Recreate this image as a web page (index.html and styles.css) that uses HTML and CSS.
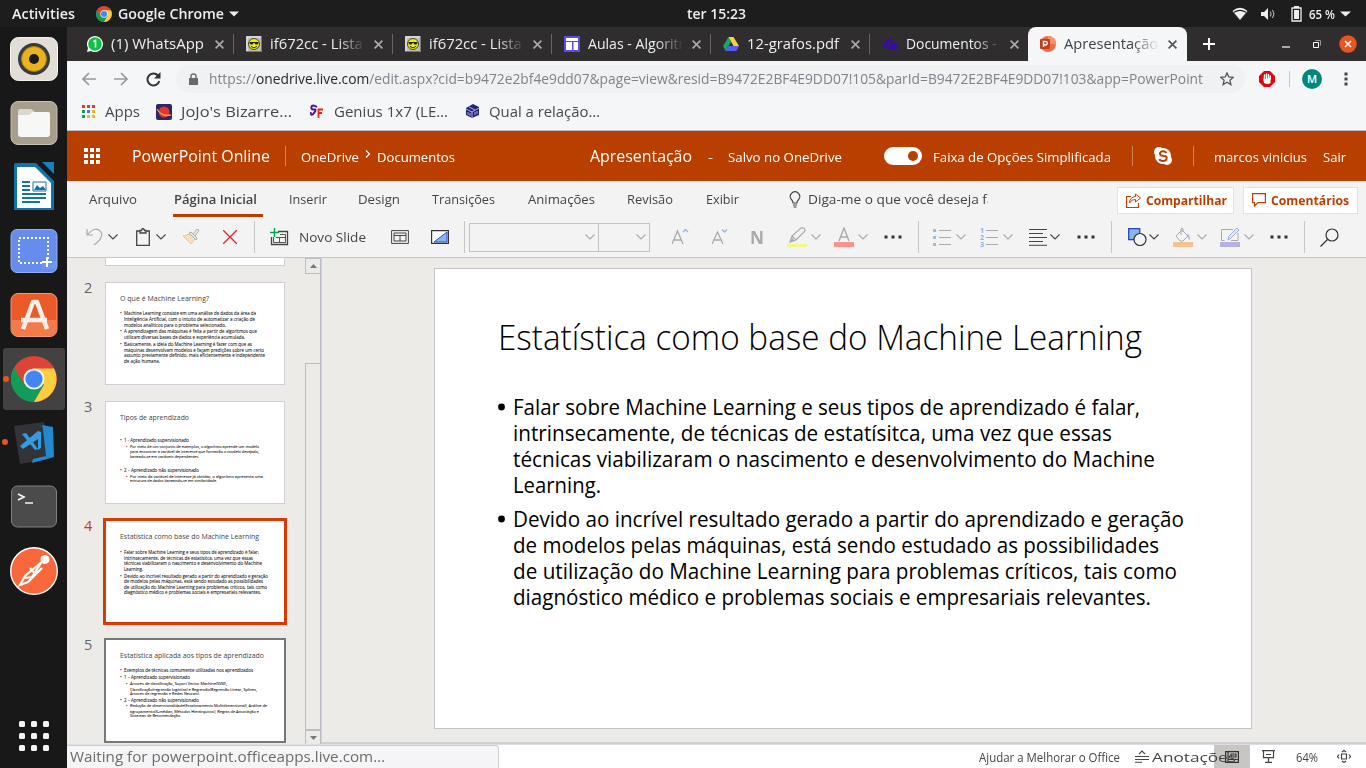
FILE: index.html
```html
<!DOCTYPE html>
<html lang="pt-BR">
<head>
<meta charset="utf-8">
<title>Apresentação</title>
<link rel="stylesheet" href="styles.css">
</head>
<body>
<svg class="defs" width="0" height="0">
  <symbol id="chrome" viewBox="0 0 48 48"><circle cx="24" cy="24" r="24" fill="#db4437"/><path d="M3.2 12A24 24 0 0 0 24 48L34.4 30 24 24 13.6 30Z" fill="#0f9d58"/><path d="M24 48A24 24 0 0 0 44.8 13H24L34.4 30Z" fill="#ffcd40"/><circle cx="24" cy="24" r="11" fill="#f1f1f1"/><circle cx="24" cy="24" r="9" fill="#4285f4"/></symbol>
  <symbol id="close" viewBox="0 0 8 8"><path d="M.5.5l7 7M7.500.5l-7 7" stroke="currentColor" stroke-width="1.5"/></symbol>
  <symbol id="chev" viewBox="0 0 10 6"><path d="M.5.5L5 5 9.500.5" fill="none" stroke="currentColor" stroke-width="1.1"/></symbol>
  <symbol id="face" viewBox="0 0 16 16"><path d="M0 0h16v16H0z" fill="#bcbcbc"/><path d="M1 15V1h14" fill="none" stroke="#eee"/><path d="M15.500 0v15.500H0" fill="none" stroke="#777"/><circle cx="8" cy="8" r="5.500" fill="#ee0" stroke="#222" stroke-width=".8"/><path d="M3.500 6h9v1l-1 1.500H9.500L8.500 7h-1l-1 1.500h-2L3.500 7z" fill="#222"/><path d="M5 10.500q3 2.500 6 0" fill="none" stroke="#222"/></symbol>
  <symbol id="dots" viewBox="0 0 18 4"><path d="M.5.5h3v3h-3zM7.500.5h3v3h-3zM14.500.5h3v3h-3z" fill="#333"/></symbol>
</svg>
<div class="desktop">
<header class="topbar">
  <b class="fit" data-w="63">Activities</b>
  <svg width="16" height="16"><use href="#chrome"/></svg>
  <b class="fit" data-w="106">Google Chrome</b>
  <svg width="10" height="6"><path d="M0 .5h10L5 5.500z" fill="#eee"/></svg>
  <b class="fit" data-w="59">ter 15:23</b>
  <svg width="16" height="14" viewBox="0 0 16 14"><path d="M.5 4Q8-2.500 15.500 4L8 13z" fill="#eee"/><path d="M2 5.200Q8 1.500 14 5.200" fill="none" stroke="#1d1d1d" stroke-width="1.100"/></svg>
  <svg width="16" height="14" viewBox="0 0 16 14"><path d="M1 5h3l4-4v12L4 9H1z" fill="#eee"/><path d="M10 4.500q2 2.500 0 5M12.300 3q3 4 0 8" fill="none" stroke="#aaa" stroke-width="1.200"/></svg>
  <svg width="11" height="16" viewBox="0 0 11 16"><path d="M1 2h9v13H1z" fill="none" stroke="#eee" stroke-width="1.300"/><path d="M3 4h5v9H3zM3 0h5v2H3z" fill="#eee"/></svg>
  <b class="fit small" data-w="26">65 %</b>
  <svg width="11" height="6"><path d="M0 .5h11L5.500 5.500z" fill="#eee"/></svg>
</header>
<aside class="dock">
  <div class="app"><svg width="48" height="44" viewBox="0 0 48 44"><rect x=".5" y=".5" width="47" height="43" rx="8" fill="#e2ddd5" stroke="#f5f2ec"/><circle cx="24" cy="22" r="16" fill="#343b42"/><circle cx="24" cy="22" r="12.500" fill="#e9b41b"/><circle cx="24" cy="22" r="12.500" fill="none" stroke="#a87a12"/><circle cx="24" cy="22" r="5" fill="#1b1b1b"/></svg></div>
  <div class="app"><svg width="48" height="44" viewBox="0 0 48 44"><rect x="1" y=".5" width="46" height="43" rx="7" fill="#a79f8b" stroke="#c9c3b5"/><path d="M8 14V10q0-2 2-2h11l4 3h12q3 0 3 3v4H8z" fill="#dcd8cf"/><path d="M8 14h11l4-3h15q2 0 2 2v20q0 3-3 3H11q-3 0-3-3z" fill="#f7f7f5"/></svg></div>
  <div class="app"><svg width="42" height="50" viewBox="0 0 42 50"><path d="M3 1h20l18 18v29H1V3q0-2 2-2z" fill="#1372ab"/><path d="M29 0h12v12z" fill="#1781bd"/><path d="M4 5h18l16 16v25H4z" fill="#fff"/><path d="M9 20h8M9 24h8M9 28h8M9 32h24M9 36h24M9 40h18" stroke="#1372ab" stroke-width="2"/><path d="M20 20h13v9H20z" fill="none" stroke="#1372ab"/><path d="M21 28l3-5 3 3 3-2 3 4z" fill="#1372ab"/></svg></div>
  <div class="app"><svg width="48" height="44" viewBox="0 0 48 44"><rect x="1" y=".5" width="46" height="43" rx="6" fill="#668dee" stroke="#94adf5"/><path d="M9 9h29v25H9z" fill="none" stroke="#fff" stroke-width="2" stroke-dasharray="2 2"/><path d="M32 32h14v8H32z" fill="#6f95ef"/><path d="M37 28v10M32 33h10" stroke="#fff" stroke-width="2"/></svg></div>
  <div class="app"><svg width="48" height="44" viewBox="0 0 48 44"><rect x="1" y=".5" width="46" height="43" rx="7" fill="#eb5a29" stroke="#f39a73"/><path d="M1 27h46v9q0 7-7 7H8q-7 0-7-7z" fill="#f37b4b"/><path d="M13 36L23 9h4l10 27M11 27h26" fill="none" stroke="#f9efe9" stroke-width="4.500" stroke-linejoin="round"/></svg></div>
  <div class="app on"><svg width="46" height="46"><use href="#chrome"/></svg></div>
  <div class="app run"><svg width="42" height="44" viewBox="0 0 42 44"><path d="M1 5L31 1l5 37-29 5z" fill="#333437"/><path d="M29 4l11 2 1 30-22 6 1-4 13-3-3-27z" fill="#2488cf"/><path d="M9 13l4-1 12 16-3 1zM25 10l3 1v16l-3 2V18L10 28l-3-3z" fill="#359be2"/></svg></div>
  <div class="app"><svg width="48" height="44" viewBox="0 0 48 44"><rect x="1.500" y="1" width="45" height="41" rx="6" fill="#4b4b4b" stroke="#808080"/><path d="M8 9l6 3-6 3M15 18h8" fill="none" stroke="#f4f4f4" stroke-width="1.700"/></svg></div>
  <div class="app"><svg width="48" height="48" viewBox="0 0 48 48"><circle cx="24" cy="24" r="23.300" fill="#f9673b" stroke="#fff" stroke-width="1.400"/><circle cx="35" cy="12.500" r="4.500" fill="#fff"/><path d="M33 14L15 29l-5 9 8-3 14-14M31 16l-11 17M20 21l6 7M15 31l7-1" fill="none" stroke="#fff" stroke-width="2.200"/></svg></div>
  <svg class="grid9" width="32" height="32" viewBox="0 0 32 32" fill="#f4f4f4"><g id="r3"><rect x="1" y="1" width="6" height="6" rx="1.500"/><rect x="13" y="1" width="6" height="6" rx="1.500"/><rect x="25" y="1" width="6" height="6" rx="1.500"/></g><use href="#r3" y="12"/><use href="#r3" y="24"/></svg>
</aside>
<main class="window">
  <nav class="tabs">
    <div class="tab"><svg width="16" height="16"><path d="M0 16l1-4A8 8 0 1 1 4 15z" fill="#fff"/><circle cx="8" cy="8" r="6.800" fill="#0dc143"/><path d="M6.500 5.500l2-1v7" fill="none" stroke="#fff" stroke-width="1.600"/></svg><span class="name"><span class="fit" data-w="93">(1) WhatsApp</span></span><svg class="x"><use href="#close"/></svg></div>
    <div class="tab"><svg width="16" height="16"><use href="#face"/></svg><span class="name fade"><span class="fit" data-w="126">if672cc - Lista de E</span></span><svg class="x"><use href="#close"/></svg></div>
    <div class="tab"><svg width="16" height="16"><use href="#face"/></svg><span class="name fade"><span class="fit" data-w="126">if672cc - Lista de E</span></span><svg class="x"><use href="#close"/></svg></div>
    <div class="tab"><svg width="16" height="16"><path d="M0 0h16v16H0z" fill="#5a49ee"/><path d="M2 2h12v3H2zM2 6h6v8H2zM9.500 6H14v8H9.500z" fill="#fff"/></svg><span class="name fade"><span class="fit" data-w="112">Aulas - Algoritmo</span></span><svg class="x"><use href="#close"/></svg></div>
    <div class="tab"><svg width="16" height="14" viewBox="0 0 16 14"><path d="M5.500 0L0 9l2.700 5L8 5z" fill="#11a861"/><path d="M5.500 0h5L16 9h-5.400z" fill="#ffcf48"/><path d="M5 9h11l-2.700 5H2.700z" fill="#5a5bf0"/></svg><span class="name"><span class="fit" data-w="92">12-grafos.pdf</span></span><svg class="x"><use href="#close"/></svg></div>
    <div class="tab last"><svg width="16" height="12" viewBox="0 0 16 12"><path d="M3 10Q-1 10 1 6q1-1 2-1Q4 0 8 1q3-1 4 3-5-1-7 3-2 1-2 3z" fill="#3a0aa8"/><path d="M6 11q-3-2 1-4 2-4 6-1 3 0 3 3 0 2-2 2z" fill="#3a0aa8"/></svg><span class="name fade"><span class="fit" data-w="105">Documentos - O</span></span><svg class="x"><use href="#close"/></svg></div>
    <div class="tab active"><svg width="16" height="16"><circle cx="8" cy="8" r="8" fill="#ed6c47"/><path d="M8 0a8 8 0 0 1 8 8H8z" fill="#ff8f6b"/><rect y="3" width="10" height="10" rx="1" fill="#c43e1c"/><path d="M3.500 11V5.500h2q1.800 0 1.800 1.700T5.500 9h-2" fill="none" stroke="#fff" stroke-width="1.400"/></svg><span class="name fade"><span class="fit" data-w="98">Apresentação.</span></span><svg class="x"><use href="#close"/></svg></div>
    <svg class="plus" width="12" height="12"><path d="M6 0v12M0 6h12" stroke="#fff" stroke-width="2"/></svg>
    <svg class="min" width="8" height="10"><path d="M0 8h8" stroke="#eee" stroke-width="1.300"/></svg>
    <svg class="max" width="8" height="8"><path d="M.5 2.500h5v5h-5z" fill="none" stroke="#fff"/><path d="M2.500.5h5v5" fill="none" stroke="#999"/></svg>
    <svg width="18" height="18"><circle cx="9" cy="9" r="8.700" fill="#e95420"/><path d="M6 6l6 6M12 6l-6 6" stroke="#fff" stroke-width="1.500"/></svg>
  </nav>
  <div class="nav">
    <svg width="15" height="14"><path d="M14 7H1M7 1L1 7l6 6" fill="none" stroke="#999" stroke-width="1.700"/></svg>
    <svg width="15" height="14"><path d="M0 7h13M7 1l6 6-6 6" fill="none" stroke="#999" stroke-width="1.700"/></svg>
    <svg width="15" height="15"><path d="M12 3.500A6 6 0 1 0 13.300 9" fill="none" stroke="#333" stroke-width="2"/><path d="M14.500 0v6.500H8z" fill="#333"/></svg>
    <div class="url">
      <svg width="9" height="12"><path d="M0 5h9v7H0z" fill="#666970"/><path d="M2 5V3q0-2 2.500-2T7 3v2" fill="none" stroke="#666970" stroke-width="1.400"/></svg>
      <span class="fit" data-w="994">https://<i>onedrive.live.com</i>/edit.aspx?cid=b9472e2bf4e9dd07&amp;page=view&amp;resid=B9472E2BF4E9DD07!105&amp;parId=B9472E2BF4E9DD07!103&amp;app=PowerPoint</span>
      <svg width="14" height="14"><path d="M7 1l1.800 4 4.400.4-3.300 2.900 1 4.300L7 10.300l-3.900 2.300 1-4.300L.8 5.400 5.200 5z" fill="none" stroke="#555" stroke-width="1.300"/></svg>
    </div>
    <svg width="16" height="16"><path d="M5 0h6l5 5v6l-5 5H5l-5-5V5z" fill="#e9000b"/><path d="M5.500 8V4M7.500 8V3M9.500 8V3.500M11.300 8V5" stroke="#fff" stroke-width="1.400" stroke-linecap="round"/><path d="M4.800 8l-1-1.500L5 12q4 2 6.500 0V7z" fill="#fff"/></svg>
    <span class="vr16"></span>
    <span class="avatar">M</span>
    <svg width="4" height="14"><path d="M.5.5h3v3h-3zM.5 5.500h3v3h-3zM.5 10.500h3v3h-3z" fill="#444"/></svg>
  </div>
  <div class="marks">
    <svg width="13" height="13"><path d="M0 0h3v3H0zM5 0h3v3H5z" fill="#e33"/><path d="M10 0h3v3h-3z" fill="#e33"/><path d="M0 5h3v3H0zM0 10h3v3H0z" fill="#1a9c50"/><path d="M5 5h3v3H5z" fill="#4674f0"/><path d="M10 5h3v3h-3zM5 10h3v3H5zM10 10h3v3h-3z" fill="#f5b51c"/></svg>
    <span class="fit" data-w="35">Apps</span>
    <svg width="16" height="16"><rect width="16" height="16" rx="2" fill="#292769"/><circle cx="8" cy="8" r="5.500" fill="#e7332b"/><path d="M1 5Q4 12 15 11 6 14 1 5z" fill="#e7a13b" stroke="#e7a13b"/></svg>
    <span class="fit" data-w="111">JoJo's Bizarre…</span>
    <svg width="14" height="16"><path d="M7 3Q2 0 1.500 3T4 5.500 4 9 .5 8" fill="none" stroke="#4a119b" stroke-width="2"/><path d="M8.500 14V5.500H13M8.500 9H12" fill="none" stroke="#e21" stroke-width="1.800"/></svg>
    <span class="fit" data-w="114">Genius 1x7 (LE…</span>
    <svg width="15" height="15"><path d="M1 4l7-4 6 3v8l-7 3-6-3z" fill="#24247c"/><path d="M1 5l6 3 7-4M7 8v6M4 3l6 3M3 8v3M5 9v3M10 8v3M12 7v3" fill="none" stroke="#aeb0dc"/></svg>
    <span class="fit" data-w="111">Qual a relação…</span>
  </div>
  <div class="brand">
    <svg width="16" height="16" viewBox="0 0 16 16" fill="#fff"><g id="w3"><path d="M0 0h4v4H0zM6 0h4v4H6zM12 0h4v4h-4z"/></g><use href="#w3" y="6"/><use href="#w3" y="12"/></svg>
    <span class="fit big" data-w="138">PowerPoint Online</span>
    <span class="vr20"></span>
    <span class="fit dn" data-w="58">OneDrive</span>
    <svg class="up" width="6" height="8"><path d="M1 .5L4.500 4 1 7.500" fill="none" stroke="#fff" stroke-width="1.200"/></svg>
    <span class="fit dn" data-w="78">Documentos</span>
    <span class="fit big" data-w="102">Apresentação</span>
    <span class="fit dn" data-w="5">-</span>
    <span class="fit dn" data-w="114">Salvo no OneDrive</span>
    <svg width="38" height="18"><rect width="38" height="18" rx="9" fill="#fff"/><circle cx="29" cy="9" r="5" fill="#b93f00"/></svg>
    <span class="fit dn" data-w="178">Faixa de Opções Simplificada</span>
    <span class="vr20"></span>
    <svg width="18" height="18"><circle cx="9" cy="9" r="8" fill="#fff"/><circle cx="5" cy="5" r="5" fill="#fff"/><circle cx="13" cy="13" r="5" fill="#fff"/><path d="M12.500 6Q11 4 8.500 4.300 5.500 5 6 7t4 2 2.500 3Q12 14 9 14T5.500 12" fill="none" stroke="#b93f00" stroke-width="2"/></svg>
    <span class="vr20"></span>
    <span class="fit dn" data-w="93">marcos vinicius</span>
    <span class="fit dn" data-w="23">Sair</span>
  </div>
  <div class="ribbon">
    <span class="fit" data-w="48">Arquivo</span>
    <span class="sel"><b class="fit" data-w="83">Página Inicial</b></span>
    <span class="fit" data-w="38">Inserir</span>
    <span class="fit" data-w="42">Design</span>
    <span class="fit" data-w="63">Transições</span>
    <span class="fit" data-w="67">Animações</span>
    <span class="fit" data-w="46">Revisão</span>
    <span class="fit" data-w="33">Exibir</span>
    <svg width="12" height="17"><path d="M4 12Q4 10 2 8A4.700 4.700 0 1 1 10 8Q8 10 8 12zM4 14h4M4.500 16h3" fill="none" stroke="#444" stroke-width="1.100"/></svg>
    <span class="tell"><span class="fit" data-w="193">Diga-me o que você deseja faz</span></span>
    <span class="btn share"><svg width="15" height="15"><path d="M5 3.500H.5v11h12V10" fill="none" stroke="#b93f00" stroke-width="1.200"/><path d="M9.500 1l5 4-5 4V6.500Q5.500 6 3.500 10 4 4 9.500 3.500z" fill="none" stroke="#b93f00"/></svg><b class="fit" data-w="81">Compartilhar</b></span>
    <span class="btn comm"><svg width="14" height="14"><path d="M.6.6h12.800v9H6L2.500 13V9.600H.6z" fill="none" stroke="#b93f00" stroke-width="1.200"/></svg><b class="fit" data-w="78">Comentários</b></span>
  </div>
  <div class="tools">
    <svg width="17" height="18"><path d="M1 1v6h6M1 7Q10-3 15 4q3 6-7 13" fill="none" stroke="#aaa" stroke-width="1.200"/></svg>
    <svg class="ch"><use href="#chev"/></svg>
    <svg width="14" height="18"><path d="M4 3H.7v14.300h12.600V3H10M4 5h6V2.500H8.500Q8 .5 7 .5T5.500 2.500H4z" fill="none" stroke="#444" stroke-width="1.300"/></svg>
    <svg class="ch"><use href="#chev"/></svg>
    <svg width="18" height="16"><path d="M1 7l7-2 5 5-4 5z" fill="#fbe0b4" stroke="#edc689"/><path d="M7 4l2-1 6 6-1 2zM11 5l4-5 2 1-4 6" fill="#eee" stroke="#aaa"/></svg>
    <svg width="14" height="14"><path d="M0 0l14 14M14 0L0 14" stroke="#e8202a" stroke-width="1.300"/></svg>
    <span class="rule"></span>
    <svg width="19" height="18"><path d="M8 3.500h9.500v13H1.500V9" fill="none" stroke="#444" stroke-width="1.300"/><path d="M10 6.500h5.500v8h-12V9M6 9.500h9.500M9.500 9.500v5" fill="none" stroke="#555"/><path d="M4.500 0v9M0 4.500h9" stroke="#00a84a" stroke-width="1.400"/></svg>
    <span class="fit" data-w="67">Novo Slide</span>
    <svg width="18" height="14"><path d="M.6.6h16.800v12.800H.6zM3 3h12v8H3zM3 5.500h12M9 5.500V11" fill="none" stroke="#444"/></svg>
    <svg width="18" height="14"><path d="M.6.6h16.800v12.800H.6z" fill="#fff" stroke="#333" stroke-width="1.200"/><path d="M3 12L16 2v10z" fill="#8ab4f0" stroke="#1c54c0"/></svg>
    <span class="rule"></span>
    <span class="combo"><svg class="ch"><use href="#chev"/></svg></span><span class="combo two"><svg class="ch"><use href="#chev"/></svg></span>
    <svg width="17" height="18"><path d="M0 16L5.500 3 11 16M2 12h7" fill="none" stroke="#aaa" stroke-width="1.300"/><path d="M11 4l2.500-2.500L16 4" fill="none" stroke="#98b4e0" stroke-width="1.300"/></svg>
    <svg width="17" height="18"><path d="M0 16L5.500 4 11 16M2 12h7" fill="none" stroke="#aaa" stroke-width="1.300"/><path d="M10 1.500L12.500 4 15 1.500" fill="none" stroke="#98b4e0" stroke-width="1.300"/></svg>
    <b class="fit bold-n" data-w="14">N</b>
    <svg width="20" height="20"><path d="M3 15l2-6L14 1q4-1 4 3L9 13zM5 9l4 4" fill="none" stroke="#aaa" stroke-width="1.200"/><path d="M3 15l2-4 3 3z" fill="#aaa"/><path d="M0 17h20v3H0z" fill="#f4f58c"/></svg>
    <svg class="ch off"><use href="#chev"/></svg>
    <svg width="20" height="20"><path d="M5 14L10 1l5 13M6.500 10h7" fill="none" stroke="#aaa" stroke-width="1.400"/><path d="M0 15h20v5H0z" fill="#f89390"/></svg>
    <svg class="ch off"><use href="#chev"/></svg>
    <svg width="18" height="4"><use href="#dots"/></svg>
    <span class="rule"></span>
    <svg width="19" height="18"><path d="M0 1h3v3H0zM0 8h3v3H0zM0 15h3v3H0z" fill="#9dbbe8"/><path d="M6 2.500h12M6 9.500h12M6 16.500h12" stroke="#aaa"/></svg>
    <svg class="ch off"><use href="#chev"/></svg>
    <svg width="19" height="20"><path d="M6 3.500h12M6 10.500h12M6 17.500h12" stroke="#aaa"/><text class="nums" x="0" y="6">1</text><text class="nums" x="0" y="13">2</text><text class="nums" x="0" y="20">3</text></svg>
    <svg class="ch off"><use href="#chev"/></svg>
    <svg width="18" height="18"><path d="M0 1.500h18M0 5.500h14M0 9.500h18M0 13.500h14M0 17.300h18" stroke="#444"/></svg>
    <svg class="ch"><use href="#chev"/></svg>
    <svg width="18" height="4"><use href="#dots"/></svg>
    <span class="rule"></span>
    <svg width="19" height="18"><path d="M.7.7h11v11h-11z" fill="#8ab4f0" stroke="#2546b8" stroke-width="1.300"/><circle cx="12" cy="11.500" r="6" fill="#f3f3f3" stroke="#333" stroke-width="1.200"/></svg>
    <svg class="ch"><use href="#chev"/></svg>
    <svg width="20" height="20"><path d="M3 9l6-6 6 6-5 5H7zM8 8V2q1-2 2 0v3" fill="none" stroke="#aaa"/><path d="M13 7q4-1 4 6-2-1-2-4z" fill="#9db3e4"/><path d="M0 15h20v5H0z" fill="#f3c391"/></svg>
    <svg class="ch off"><use href="#chev"/></svg>
    <svg width="20" height="20"><path d="M13 2.500H1.500v11h3M18 6v7.500h-7" fill="none" stroke="#aaa"/><path d="M8 13l1-4 8-8 2 2-8 8z" fill="#e4eaf7" stroke="#9aabe0"/><path d="M0 15h20v5H0z" fill="#b5b0e2"/></svg>
    <svg class="ch off"><use href="#chev"/></svg>
    <svg width="18" height="4"><use href="#dots"/></svg>
    <span class="rule"></span>
    <svg width="19" height="19"><circle cx="12" cy="7" r="6" fill="none" stroke="#333" stroke-width="1.200"/><path d="M7.500 11.500L.5 18.500" stroke="#333" stroke-width="1.200"/></svg>
  </div>
  <section class="work">
    <div class="panel">
      <div class="row first"><i class="num"></i><div class="thumb"></div></div>
      <div class="row"><i class="num">2</i><svg class="thumb" viewBox="0 0 178 101">
        <text class="h" x="14" y="18" textLength="89">O que é Machine Learning?</text>
        <text x="14" y="32">•</text><text x="18" y="32" textLength="132">Machine Learning consiste em uma análise de dados da área da</text>
        <text x="18" y="38" textLength="131">Inteligência Artificial, com o intuito de automatizar a criação de</text>
        <text x="18" y="43.500" textLength="102">modelos analíticos para o problema selecionado.</text>
        <text x="14" y="50">•</text><text x="18" y="50" textLength="133">A aprendizagem das máquinas é feita a partir de algoritmos que</text>
        <text x="18" y="56" textLength="121">utilizam diversas bases de dados e experiência acumulada.</text>
        <text x="14" y="63">•</text><text x="18" y="63" textLength="128">Basicamente, a ideia do Machine Learning é fazer com que as</text>
        <text x="18" y="68.500" textLength="140">máquinas desenvolvam modelos e façam predições sobre um certo</text>
        <text x="18" y="74" textLength="141">assunto previamente definido, mais eficientemente e independente</text>
        <text x="18" y="79.500" textLength="36">de ação humana.</text></svg></div>
      <div class="row"><i class="num">3</i><svg class="thumb" viewBox="0 0 178 101">
        <text class="h" x="14" y="18" textLength="69">Tipos de aprendizado</text>
        <text x="14" y="39.500">•</text><text x="18" y="39.500" textLength="65">1 - Aprendizado supervisionado</text>
        <g class="s"><text x="20" y="45.500">•</text><text x="24" y="45.500" textLength="129">Por meio de um conjunto de exemplos, o algoritmo aprende um modelo</text>
        <text x="24" y="51" textLength="129">para encontrar a variável de interesse que formarão o modelo desejado,</text>
        <text x="24" y="56" textLength="69">baseado-se em variáveis dependentes.</text></g>
        <text x="14" y="70">•</text><text x="18" y="70" textLength="75">2 – Aprendizado não supervisionado</text>
        <g class="s"><text x="20" y="75.500">•</text><text x="24" y="75.500" textLength="133">Por meio da variável de interesse já obtidas, o algoritmo apresenta uma</text>
        <text x="24" y="80" textLength="87">estrutura de dados baseando-se em similaridade.</text></g></svg></div>
      <div class="row cur"><i class="num">4</i><svg class="thumb" viewBox="0 0 178 101">
        <text class="h" x="14" y="18" textLength="139">Estatística como base do Machine Learning</text>
        <text x="14" y="32.500">•</text><text x="18" y="32.500" textLength="135">Falar sobre Machine Learning e seus tipos de aprendizado é falar,</text>
        <text x="18" y="38.500" textLength="129">intrinsecamente, de técnicas de estatísitca, uma vez que essas</text>
        <text x="18" y="43.500" textLength="138">técnicas viabilizaram o nascimento e desenvolvimento do Machine</text>
        <text x="18" y="49.500" textLength="19">Learning.</text>
        <text x="14" y="57">•</text><text x="18" y="57" textLength="144">Devido ao incrível resultado gerado a partir do aprendizado e geração</text>
        <text x="18" y="62" textLength="139">de modelos pelas máquinas, está sendo estudado as possibilidades</text>
        <text x="18" y="68" textLength="143">de utilização do Machine Learning para problemas críticos, tais como</text>
        <text x="18" y="73" textLength="137">diagnóstico médico e problemas sociais e empresariais relevantes.</text></svg></div>
      <div class="row next"><i class="num">5</i><svg class="thumb" viewBox="0 0 178 101">
        <text class="h" x="14" y="18" textLength="144">Estatística aplicada aos tipos de aprendizado</text>
        <text x="14" y="32">•</text><text x="18" y="32" textLength="129">Exemplos de técnicas comumente utilizadas nos aprendizados</text>
        <text x="14" y="39">•</text><text x="18" y="39" textLength="66">1 – Aprendizado supervisionado</text>
        <g class="s"><text x="20" y="45">•</text><text x="24" y="45" textLength="97">Árvores de classificação, Suport Vector Machine(SVM),</text>
        <text x="24" y="50.500" textLength="127">Classificação(regressão logística) e Regressão(Regressão Linear, Splines,</text>
        <text x="24" y="55" textLength="70">Árvores de regressão e Redes Neurais).</text></g>
        <text x="14" y="62">•</text><text x="18" y="62" textLength="75">2 – Aprendizado não supervisionado</text>
        <g class="s"><text x="20" y="67">•</text><text x="24" y="67" textLength="137">Redução de dimensionalidade(Escalonamento Multidimensional), Análise de</text>
        <text x="24" y="72.500" textLength="129">agrupamento(K-médias, Métodos Hierárquicos), Regras de Associação e</text>
        <text x="24" y="77" textLength="51">Sistemas de Recomendação.</text></g></svg></div>
    </div>
    <div class="scroll"><span class="sb"><svg width="7" height="4"><path d="M0 4h7L3.500 0z" fill="#777"/></svg></span><span class="track"></span><span class="grip"></span><span class="sb"><svg width="7" height="4"><path d="M0 0h7L3.500 4z" fill="#777"/></svg></span></div>
    <div class="stage">
      <svg class="slide" viewBox="0 0 816 459">
        <text class="title" x="63" y="81" textLength="644">Estatística como base do Machine Learning</text>
        <g class="body">
        <circle cx="66.500" cy="138" r="3.400"/><text x="78" y="146" textLength="627">Falar sobre Machine Learning e seus tipos de aprendizado é falar,</text>
        <text x="78" y="172" textLength="599">intrinsecamente, de técnicas de estatísitca, uma vez que essas</text>
        <text x="78" y="198" textLength="642">técnicas viabilizaram o nascimento e desenvolvimento do Machine</text>
        <text x="78" y="224" textLength="88">Learning.</text>
        <circle cx="66.500" cy="250" r="3.400"/><text x="78" y="258" textLength="671">Devido ao incrível resultado gerado a partir do aprendizado e geração</text>
        <text x="78" y="284" textLength="646">de modelos pelas máquinas, está sendo estudado as possibilidades</text>
        <text x="78" y="310" textLength="664">de utilização do Machine Learning para problemas críticos, tais como</text>
        <text x="78" y="336" textLength="638">diagnóstico médico e problemas sociais e empresariais relevantes.</text>
        </g>
      </svg>
    </div>
  </section>
  <footer class="status">
    <span class="fit" data-w="141">Ajudar a Melhorar o Office</span>
    <svg width="14" height="13"><path d="M4 4l3-3 3 3M0 6.500h14M0 9.500h14M0 12.300h7" fill="none" stroke="#444" stroke-width="1.100"/></svg>
    <span class="fit" data-w="84">Anotações</span>
    <span class="view"><svg width="14" height="12"><path d="M.6.6h12.800v10.800H.6zM3 .6v10.800M3 8.500h10.400M6 3h5v3H6z" fill="none" stroke="#333" stroke-width="1.200"/></svg></span>
    <svg width="13" height="13"><path d="M0 .7h13M1.500.7v7h10v-7M4 4.500h5M6.500 8v4M3 12.300h7" fill="none" stroke="#444" stroke-width="1.200"/></svg>
    <span class="fit" data-w="22">64%</span>
    <svg width="14" height="13"><path d="M4.500 4h5v5h-5zM5 2l2-1.500L9 2M5 11l2 1.500L9 11M2 4.500L.5 6.500 2 8.500M12 4.500l1.500 2-1.500 2" fill="none" stroke="#444" stroke-width="1.200"/></svg>
    <div class="loading"><span class="fit" data-w="315">Waiting for powerpoint.officeapps.live.com…</span></div>
  </footer>
</main>
</div>
<script src="fit.js"></script>
</body>
</html>
```

FILE: styles.css
```css
* { box-sizing: border-box; }
body { margin: 0; width: 1366px; height: 768px; overflow: hidden; font-family: "Open Sans", "Noto Sans", sans-serif; font-size: 13px; }
svg { display: block; flex: none; }
.defs { position: absolute; }
.fit { display: block; white-space: pre; width: max-content; transform-origin: 0 50%; }
.desktop { display: grid; grid-template: 27px 741px / 67px 1299px; }
.topbar { grid-column: 1 / 3; display: grid; grid-template-columns: 84px 22px 111px 458px 545px 28px 31px 18px 31px 26px; align-items: center; padding-left: 12px; background: #1d1d1d; color: #eee; font-size: 14px; line-height: 26px; }
.topbar b { font-weight: 600; }
.topbar .small { font-size: 13px; }
.dock { background: #181818; display: flex; flex-direction: column; align-items: center; }
.app { width: 67px; height: 64px; display: flex; align-items: center; justify-content: center; flex: none; }
.app.on { width: 62px; height: 62px; margin: 1px 0; border-radius: 3px; background: #424242; }
.app.on, .app.run { position: relative; }
.app.on::before, .app.run::before { content: ""; position: absolute; left: 2px; top: 28px; width: 6px; height: 6px; border-radius: 50%; background: #e95420; }
.app.on::before { left: 0; }
.grid9 { margin: auto 0 16px; }
.window { display: grid; grid-template-rows: 34px 36px 34px 50px 36px 41px 487px 23px; background: #f5f6f7; min-width: 0; }
.tabs { background: #302d2f; color: #eceff1; display: flex; align-items: center; padding-left: 8px; font-size: 14.5px; }
.tab { width: 159px; height: 34px; flex: none; display: grid; grid-template-columns: 24px 104px 8px; align-items: center; padding-left: 12px; background: linear-gradient(#666, #666) 158px 7px / 1px 20px no-repeat; }
.tab.last { background: none; }
.tab.active { background: #f5f6f7; color: #414348; border-radius: 8px 8px 0 0; margin-left: -1px; }
.name { width: 96px; overflow: hidden; line-height: 30px; }
.fade { -webkit-mask: linear-gradient(90deg, #000 68px, transparent 95px); mask: linear-gradient(90deg, #000 68px, transparent 95px); }
.x { width: 9px; height: 9px; color: #aaa; }
.active .x { color: #555; }
.plus { margin: 0 67px 0 16px; }
.min { margin-right: 23px; }
.max { margin-right: 18px; }
.nav { display: grid; grid-template-columns: 32px 32px 30px 1083px 30px 13px 42px 10px; align-items: center; padding-left: 15px; }
.url { width: 1069px; height: 28px; border-radius: 14px; background: #eff1f3; display: grid; grid-template-columns: 20px 1011px 14px; align-items: center; padding-left: 13px; font-size: 14.5px; line-height: 26px; color: #80838a; }
.url i { font-style: normal; color: #24272b; }
.vr16 { width: 1px; height: 16px; background: #c4c7ca; }
.avatar { width: 20px; height: 20px; border-radius: 50%; background: #00897b; color: #fff; font-size: 11px; font-weight: 600; line-height: 20px; text-align: center; }
.marks { display: grid; grid-template-columns: 23px 51px 25px 129px 24px 131px 24px 120px; align-items: center; padding: 0 0 4px 15px; font-size: 14.5px; color: #45484d; border-bottom: 1px solid #b9bdc2; }
.brand { background: #b93f00; color: #fff; display: grid; grid-template-columns: 48px 153px 16px 64px 12px 213px 118px 20px 156px 49px 199px 22px 39px 21px 109px 30px; align-items: center; padding-left: 17px; font-size: 13px; }
.brand .big { font-size: 16px; }
.brand .dn { margin-top: 1px; }
.brand .up { margin-top: -5px; }
.vr20 { width: 1px; height: 20px; background: #d3835c; }
.ribbon { background: #f3f3f3; color: #444; display: grid; grid-template-columns: 84px 116px 69px 74px 96px 99px 79px 83px 19px 309px 126px 114px; align-items: center; padding-left: 22px; font-size: 13px; }
.ribbon b { font-weight: 600; }
.sel { width: 90px; height: 36px; padding-left: 1px; margin-left: 0; border-bottom: 3px solid #b93f00; line-height: 36px; }
.tell { width: 180px; overflow: hidden; }
.btn { height: 27px; margin-top: 2px; background: #fff; border: 1px solid #e4e2df; color: #b93f00; display: flex; align-items: center; gap: 5px; padding-left: 8px; }
.btn b { font-weight: 700; }
.share { width: 117px; }
.comm { width: 115px; }
.tools { background: #f3f3f3; border-bottom: 1px solid #c8c6c4; color: #444; display: grid; grid-template-columns: 22px 28px 20px 26px 41px 31px 16px 29px 92px 40px 33px 5px 129px 74px 40px 38px 37px 24px 23px 24px 26px 34px 15px 23px 24px 23px 26px 21px 27px 34px 17px 21px 24px 24px 23px 24px 26px 34px 16px 30px; align-items: center; padding-left: 19px; }
.ch { width: 10px; height: 6px; color: #444; }
.ch.off { color: #aaa; }
.rule { width: 1px; height: 32px; background: #c8c6c4; }
.combo { width: 130px; height: 29px; border: 1px solid #c2c2c2; display: flex; align-items: center; justify-content: flex-end; padding-right: 3px; }
.combo.two { width: 52px; }
.combo .ch { color: #aaa; }
.bold-n { font-size: 18px; color: #aaa; }
.nums { font-size: 7px; fill: #8fb0e4; font-weight: 700; }
.work { background: #ecebe8; display: grid; grid-template-columns: 238px 17px 1044px; overflow: hidden; min-height: 0; border-bottom: 1px solid #dedede; }
.panel { padding-left: 17px; height: 486px; overflow: hidden; }
.row { display: grid; grid-template-columns: 21px 180px; height: 103px; margin-bottom: 16px; }
.row.first { height: 8px; margin-bottom: 16px; }
.num { font-style: normal; font-size: 14.5px; color: #666; line-height: 12px; }
.thumb { width: 180px; height: 103px; background: #fff; border: 1px solid #cfcfd3; font-size: 4.7px; fill: #222; }
.first .thumb { height: 8px; border-top: 0; }
.thumb text { stroke: #222; stroke-width: .08px; }
.thumb .h { font-size: 7px; fill: #444; stroke: none; }
.thumb .s { font-size: 3.8px; }
.cur .thumb { border-color: #ddd; outline: 3px solid #d83b01; outline-offset: -1px; }
.cur .num { color: #c43e1c; }
.next .thumb { border-color: #777; outline: 1px solid #777; }
.scroll { display: grid; grid-template-rows: 16px 89px 367px 15px; border-right: 1px solid #d0d0d3; }
.sb { width: 16px; border: 1px solid #bbbdc4; display: grid; place-items: center; }
.grip { width: 16px; border: 1px solid #bbbdc4; }
.track { width: 16px; border-right: 1px solid #bbbdc4; }
.stage { padding: 10px 0 0 112px; border-bottom: 2px solid #cfcfd3; height: 486px; }
.slide { width: 818px; height: 461px; background: #fff; border: 1px solid #c4c4c4; fill: #000; }
.slide .title { font-size: 34.5px; font-weight: 300; }
.slide .body { font-size: 21.3px; }
.status { position: relative; background: #fff; color: #444; display: grid; grid-template-columns: 156px 17px 62px 48px 34px 41px 15px; align-items: center; padding-left: 912px; font-size: 12px; }
.status > .fit { margin-top: 2px; }
.view { width: 36px; height: 23px; margin-left: 0; background: #c8c6c4; display: grid; place-items: center; }
.loading { position: absolute; left: 0; top: 0; width: 432px; height: 23px; padding-left: 3px; background: #f5f5f7; border: 1px solid #d0d0d3; border-left: 0; border-bottom: 0; border-radius: 0 3px 0 0; color: #6f6b68; font-size: 14.5px; line-height: 22px; }
```

FILE: fit.js
```js
// Scales each label horizontally to its data-w width.
document.querySelectorAll(".fit").forEach(function (el) {
  var want = parseFloat(el.dataset.w);
  var have = el.getBoundingClientRect().width;
  el.style.transform = "scaleX(" + want / have + ")";
  el.style.marginRight = want - have + "px";
});
document.querySelectorAll("text[textLength]").forEach(function (el) {
  el.setAttribute("lengthAdjust", "spacingAndGlyphs");
});
```
